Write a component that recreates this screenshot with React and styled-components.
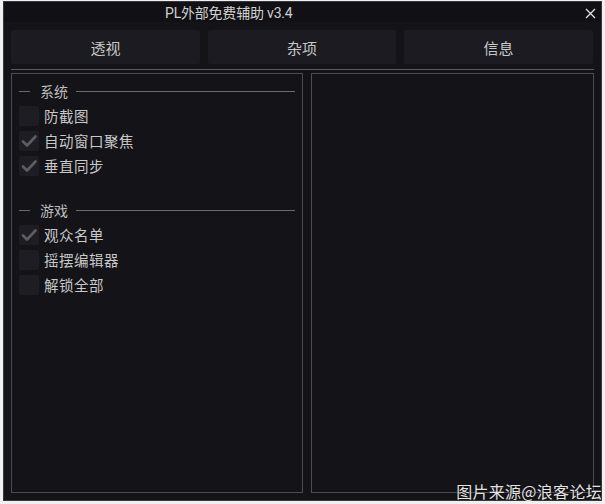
import React from 'react'
import styled, { createGlobalStyle } from 'styled-components'

const GlobalStyle = createGlobalStyle`
body{
    margin:0;
    background:#f0f0f0;
    font-family:"Noto Sans CJK SC","Noto Sans",sans-serif;
}
`

const sections = [
    {
        title: '系统',
        items: [
            { label: '防截图', checked: false },
            { label: '自动窗口聚焦', checked: true },
            { label: '垂直同步', checked: true },
        ],
    },
    {
        title: '游戏',
        items: [
            { label: '观众名单', checked: true },
            { label: '摇摆编辑器', checked: false },
            { label: '解锁全部', checked: false },
        ],
    },
]

function Check() {
    return (
        <svg width="20" height="20" viewBox="0 0 20 20">
            <path d="M4 10.5 L8 14.5 L16.5 5.5" fill="none" stroke="#5e5d62" strokeWidth="2.6" strokeLinecap="round" strokeLinejoin="round"/>
        </svg>
    )
}

function App() {
    return (
        <>
            <GlobalStyle/>
            <Window>
                <TitleBar>
                    <Title>PL外部免费辅助 v3.4</Title>
                    <Close>
                        <svg width="11" height="11" viewBox="0 0 11 11">
                            <path d="M1 1 L10 10 M10 1 L1 10" stroke="#e0e0e0" strokeWidth="1.3"/>
                        </svg>
                    </Close>
                </TitleBar>
                <Body>
                    <Tabs>
                        <Tab>透视</Tab>
                        <Tab>杂项</Tab>
                        <Tab>信息</Tab>
                    </Tabs>
                    <Divider/>
                    <Panels>
                        <Panel width="293px">
                            {sections.map((s, i) => (
                                <Section key={s.title} first={i === 0}>
                                    <Header>
                                        <Dash/>
                                        <HeaderText>{s.title}</HeaderText>
                                        <Rule/>
                                    </Header>
                                    {s.items.map(item => (
                                        <Row key={item.label}>
                                            <Box>{item.checked && <Check/>}</Box>
                                            <Label>{item.label}</Label>
                                        </Row>
                                    ))}
                                </Section>
                            ))}
                        </Panel>
                        <Panel width="284px"/>
                    </Panels>
                </Body>
                <Watermark>图片来源@浪客论坛</Watermark>
            </Window>
        </>
    )
}

export default App

const Window = styled.div`
position:relative;
margin:1px 0 0 3px;
width:599px;
height:500px;
box-sizing:border-box;
border:1px solid #38373c;
background:#141318;
display:flex;
flex-direction:column;
`

const TitleBar = styled.div`
height:21px;
background:#111014;
display:flex;
align-items:center;
`

const Title = styled.div`
padding-left:161px;
font-family:"Roboto","Noto Sans CJK SC",sans-serif;
font-size:14px;
color:#d0d0d0;
letter-spacing:-0.2px;
`

const Close = styled.div`
margin-left:auto;
margin-right:5px;
margin-top:2px;
display:flex;
`

const Body = styled.div`
flex:1;
display:flex;
flex-direction:column;
padding:8px 7px 7px 7px;
`

const Tabs = styled.div`
display:grid;
grid-template-columns:189px 188px 189px;
gap:8px;
height:34px;
`

const Tab = styled.div`
background:#1c1b21;
border-radius:2px;
display:flex;
align-items:center;
justify-content:center;
color:#c8c8c8;
font-size:15px;
`

const Divider = styled.div`
margin-top:5px;
width:583px;
height:1px;
background:#5c5b60;
`

const Panels = styled.div`
margin-top:3px;
display:flex;
gap:8px;
height:420px;
`

const Panel = styled.div`
width:${p => p.width};
box-sizing:border-box;
border:1px solid #4d4c51;
padding:5px 7px 0 7px;
`

const Section = styled.div`
margin-top:${p => (p.first ? '0' : '20px')};
`

const Header = styled.div`
height:24px;
display:flex;
align-items:center;
`

const Dash = styled.div`
width:11px;
height:1px;
background:#6a696e;
`

const HeaderText = styled.span`
margin:0 8px 0 10px;
font-size:14px;
color:#bdbdbd;
`

const Rule = styled.div`
flex:1;
height:1px;
background:#6a696e;
`

const Row = styled.div`
height:25px;
display:flex;
align-items:center;
`

const Box = styled.div`
width:20px;
height:20px;
border-radius:2px;
background:#1e1d23;
display:flex;
`

const Label = styled.span`
margin-left:5px;
font-size:14.5px;
color:#c8c8c8;
letter-spacing:0.5px;
`

const Watermark = styled.div`
position:absolute;
right:-1px;
bottom:-3px;
font-size:16px;
color:#e4e4e4;
letter-spacing:0.3px;
text-shadow:0 0 1px #000;
`
